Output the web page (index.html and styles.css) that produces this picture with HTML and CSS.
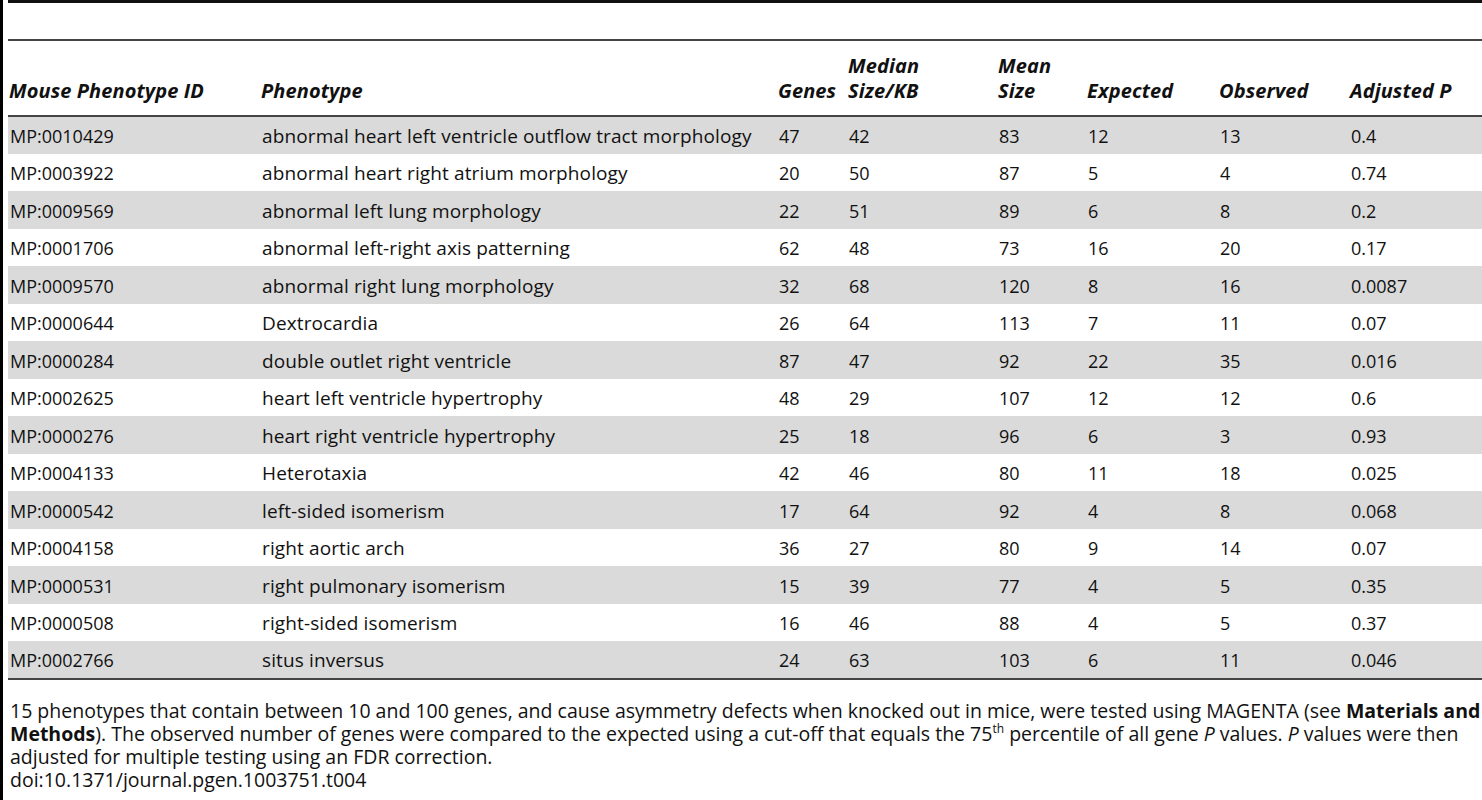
FILE: index.html
```html
<!DOCTYPE html>
<html lang="en">
<head>
    <meta charset="UTF-8">
    <title>Table 4 - Asymmetry phenotypes</title>
    <link rel="stylesheet" href="styles.css">
</head>
<body>
    <div class="figure">
        <div class="table-title"></div>
        <table class="data-table">
            <colgroup>
                <col class="c-id">
                <col class="c-pheno">
                <col class="c-genes">
                <col class="c-median">
                <col class="c-mean">
                <col class="c-exp">
                <col class="c-obs">
                <col class="c-adj">
            </colgroup>
            <thead>
                <tr>
                    <th>Mouse Phenotype ID</th>
                    <th>Phenotype</th>
                    <th>Genes</th>
                    <th>Median<br>Size/KB</th>
                    <th>Mean<br>Size</th>
                    <th>Expected</th>
                    <th>Observed</th>
                    <th>Adjusted P</th>
                </tr>
            </thead>
            <tbody>
                <tr><td>MP:0010429</td><td class="name">abnormal heart left ventricle outflow tract morphology</td><td>47</td><td>42</td><td>83</td><td>12</td><td>13</td><td>0.4</td></tr>
                <tr><td>MP:0003922</td><td class="name">abnormal heart right atrium morphology</td><td>20</td><td>50</td><td>87</td><td>5</td><td>4</td><td>0.74</td></tr>
                <tr><td>MP:0009569</td><td class="name">abnormal left lung morphology</td><td>22</td><td>51</td><td>89</td><td>6</td><td>8</td><td>0.2</td></tr>
                <tr><td>MP:0001706</td><td class="name">abnormal left-right axis patterning</td><td>62</td><td>48</td><td>73</td><td>16</td><td>20</td><td>0.17</td></tr>
                <tr><td>MP:0009570</td><td class="name">abnormal right lung morphology</td><td>32</td><td>68</td><td>120</td><td>8</td><td>16</td><td>0.0087</td></tr>
                <tr><td>MP:0000644</td><td class="name">Dextrocardia</td><td>26</td><td>64</td><td>113</td><td>7</td><td>11</td><td>0.07</td></tr>
                <tr><td>MP:0000284</td><td class="name">double outlet right ventricle</td><td>87</td><td>47</td><td>92</td><td>22</td><td>35</td><td>0.016</td></tr>
                <tr><td>MP:0002625</td><td class="name">heart left ventricle hypertrophy</td><td>48</td><td>29</td><td>107</td><td>12</td><td>12</td><td>0.6</td></tr>
                <tr><td>MP:0000276</td><td class="name">heart right ventricle hypertrophy</td><td>25</td><td>18</td><td>96</td><td>6</td><td>3</td><td>0.93</td></tr>
                <tr><td>MP:0004133</td><td class="name">Heterotaxia</td><td>42</td><td>46</td><td>80</td><td>11</td><td>18</td><td>0.025</td></tr>
                <tr><td>MP:0000542</td><td class="name">left-sided isomerism</td><td>17</td><td>64</td><td>92</td><td>4</td><td>8</td><td>0.068</td></tr>
                <tr><td>MP:0004158</td><td class="name">right aortic arch</td><td>36</td><td>27</td><td>80</td><td>9</td><td>14</td><td>0.07</td></tr>
                <tr><td>MP:0000531</td><td class="name">right pulmonary isomerism</td><td>15</td><td>39</td><td>77</td><td>4</td><td>5</td><td>0.35</td></tr>
                <tr><td>MP:0000508</td><td class="name">right-sided isomerism</td><td>16</td><td>46</td><td>88</td><td>4</td><td>5</td><td>0.37</td></tr>
                <tr><td>MP:0002766</td><td class="name">situs inversus</td><td>24</td><td>63</td><td>103</td><td>6</td><td>11</td><td>0.046</td></tr>
            </tbody>
        </table>
        <div class="footnote">
            <p>15 phenotypes that contain between 10 and 100 genes, and cause asymmetry defects when knocked out in mice, were tested using MAGENTA (see <strong>Materials and</strong><br><strong>Methods</strong>). The observed number of genes were compared to the expected using a cut-off that equals the 75<sup>th</sup> percentile of all gene <em>P</em> values. <em>P</em> values were then<br>adjusted for multiple testing using an FDR correction.</p>
            <p>doi:10.1371/journal.pgen.1003751.t004</p>
        </div>
    </div>
</body>
</html>
```

FILE: styles.css
```css
html, body {
    margin: 0;
    padding: 0;
    background: #fff;
    overflow: hidden;
}
body {
    font-family: "Open Sans", "DejaVu Sans", sans-serif;
    font-size: 18px;
    color: #111;
}
.figure {
    border-left: 3px solid #000;
    padding-left: 5px;
    height: 800px;
    width: 1490px;
}
.table-title {
    border-top: 3px solid #111;
    height: 36px;
}
.data-table {
    border-collapse: collapse;
    table-layout: fixed;
    width: 1474px;
    border-top: 2px solid #444;
}
.c-id { width: 252px; }
.c-pheno { width: 517px; }
.c-genes { width: 70px; }
.c-median { width: 150px; }
.c-mean { width: 89px; }
.c-exp { width: 132px; }
.c-obs { width: 131px; }
.c-adj { width: 133px; }
.data-table th {
    font-size: 20px;
    font-style: italic;
    font-weight: 700;
    text-align: left;
    vertical-align: bottom;
    line-height: 25px;
    height: 76px;
    padding: 0 0 12px 1px;
    letter-spacing: 0.1px;
    white-space: nowrap;
    border-bottom: 2px solid #444;
    box-sizing: border-box;
}
.data-table td {
    height: 37.5px;
    padding: 2px 0 0 2px;
    vertical-align: middle;
    white-space: nowrap;
    box-sizing: border-box;
}
.data-table td.name {
    font-size: 19px;
    letter-spacing: 0.12px;
}
.data-table tbody tr:nth-child(odd) { background: #dadada; }
.data-table tbody tr:last-child { border-bottom: 2px solid #444; }
.footnote {
    padding: 19px 0 0 2px;
    font-size: 19.5px;
    line-height: 23px;
    white-space: nowrap;
}
.footnote p { margin: 0; }
.footnote sup {
    font-size: 12px;
    line-height: 0;
    vertical-align: 8px;
}
```
